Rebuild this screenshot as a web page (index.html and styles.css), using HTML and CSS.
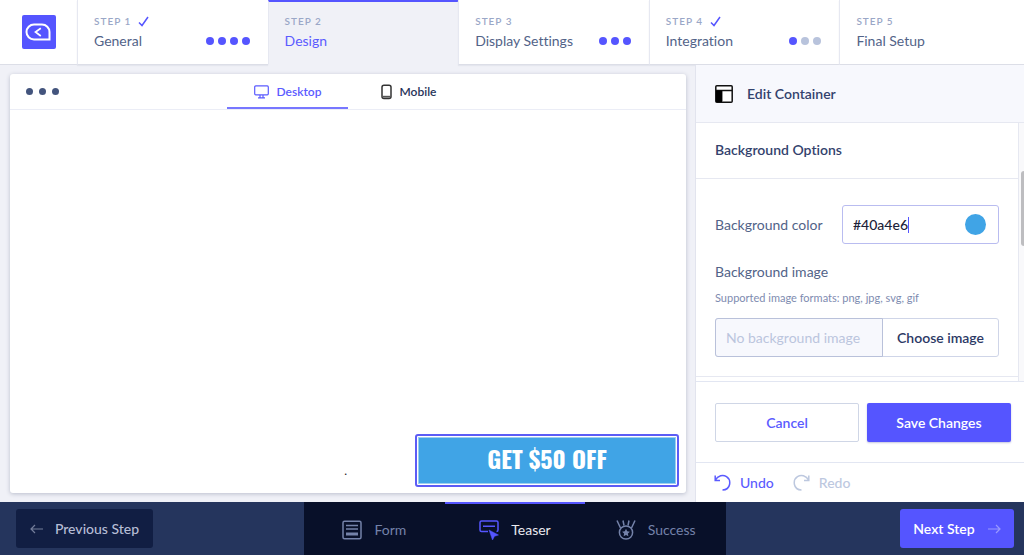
FILE: index.html
```
<!DOCTYPE html>
<html lang="en">
<head>
<meta charset="utf-8">
<meta name="viewport" content="width=device-width, initial-scale=1">
<title>Campaign editor</title>
<link rel="stylesheet" href="styles.css">
</head>
<body>
<div class="app">
  <header class="steps">
    <a class="brand" href="#" aria-label="Home">
      <svg width="34" height="34" viewBox="0 0 34 34"><rect width="34" height="34" rx="2" fill="#5555ff"/><path d="M12 9.500H20A7.500 7.500 0 0 1 27.500 17V24.500H12A7.500 7.500 0 0 1 12 9.500Z" fill="none" stroke="#fff" stroke-width="2"/><path d="M18.800 13.200L13.500 17l5.300 4" fill="none" stroke="#fff" stroke-width="1.700"/></svg>
    </a>
    <a class="step" href="#">
      <span class="step-no">STEP 1 <svg class="check" width="11" height="11" viewBox="0 0 11 11"><path d="M1 6.500L4 9.500L10 1"/></svg></span>
      <span class="step-name">General</span>
      <span class="dots"><i></i><i></i><i></i><i></i></span>
    </a>
    <a class="step step-active" href="#" aria-current="step">
      <span class="step-no">STEP 2</span>
      <span class="step-name">Design</span>
    </a>
    <a class="step" href="#">
      <span class="step-no">STEP 3</span>
      <span class="step-name">Display Settings</span>
      <span class="dots"><i></i><i></i><i></i></span>
    </a>
    <a class="step" href="#">
      <span class="step-no">STEP 4 <svg class="check" width="11" height="11" viewBox="0 0 11 11"><path d="M1 6.500L4 9.500L10 1"/></svg></span>
      <span class="step-name">Integration</span>
      <span class="dots"><i></i><i class="off"></i><i class="off"></i></span>
    </a>
    <a class="step" href="#">
      <span class="step-no">STEP 5</span>
      <span class="step-name">Final Setup</span>
    </a>
  </header>

  <main class="workspace">
    <section class="preview">
      <div class="preview-bar">
        <span class="window-dots"><i></i><i></i><i></i></span>
        <button class="device device-active" type="button"><svg width="15" height="14" viewBox="0 0 15 14" fill="none" stroke="currentColor" stroke-width="1.200"><rect x=".700" y=".900" width="13.600" height="8.900" rx="1"/><path d="M6 10v2.500M9 10v2.500M4 12.900h7"/></svg>Desktop</button>
        <button class="device" type="button"><svg width="11" height="16" viewBox="0 0 11 16" fill="none" stroke="#333" stroke-width="1.500"><rect x="1" y="1.200" width="9" height="13.300" rx="2"/><path d="M1.500 12.700h8" stroke="#555" stroke-width="1.800"/></svg>Mobile</button>
      </div>
      <div class="canvas">
        <span class="speck">.</span>
        <div class="teaser"><div class="teaser-body">GET $50 OFF</div></div>
      </div>
    </section>

    <aside class="panel">
      <div class="panel-head">
        <svg width="18" height="18" viewBox="0 0 18 18"><rect x=".800" y=".800" width="16.400" height="16.400" rx="1" fill="#fff" stroke="#111" stroke-width="1.500"/><path d="M1 5.500h16M6.800 5.500v11" stroke="#111" stroke-width="1.300"/><path d="M1 5.500h6v11.500H1z" fill="#000"/></svg>
        <h1>Edit Container</h1>
      </div>
      <div class="panel-scroll">
        <div class="options">
          <h2>Background Options</h2>
          <form class="fields">
            <div class="color-row">
              <label for="color">Background color</label>
              <div class="color-field"><input id="color" type="text" value="#40a4e6" size="7"><span class="caret"></span><button class="swatch" type="button" aria-label="Pick color"></button></div>
            </div>
            <label class="image-label" for="image">Background image</label>
            <p class="hint">Supported image formats: png, jpg, svg, gif</p>
            <div class="image-row">
              <input id="image" type="text" placeholder="No background image" readonly>
              <button type="button">Choose image</button>
            </div>
          </form>
        </div>
        <span class="thumb"></span>
      </div>
      <div class="actions">
        <button class="cancel" type="button">Cancel</button>
        <button class="save" type="button">Save Changes</button>
      </div>
      <div class="history">
        <button type="button"><svg width="17" height="17" viewBox="0 0 17 17" fill="none" stroke="currentColor" stroke-width="1.500"><path d="M1.200 1.500V6.500H6M1.200 6.200C4 1.500 9 .300 12.500 2.700C17.500 6 17 15.800 8.500 16"/></svg>Undo</button>
        <button type="button" disabled><svg width="17" height="17" viewBox="0 0 17 17" fill="none" stroke="currentColor" stroke-width="1.500"><path d="M15.800 1.500V6.500H11M15.800 6.200C13 1.500 8 .300 4.500 2.700C-.500 6 0 15.800 8.500 16"/></svg>Redo</button>
      </div>
    </aside>
  </main>

  <footer class="bottom">
    <div class="side"><button class="prev" type="button"><svg width="14" height="10" viewBox="0 0 14 10"><path d="M13 5H1M5 1L1 5l4 4"/></svg>Previous Step</button></div>
    <nav class="views">
      <a href="#"><svg width="20" height="20" viewBox="0 0 20 20" fill="none" stroke="currentColor" stroke-width="1.500"><rect x="1" y="1.300" width="18" height="17.400" rx="1.500"/><path d="M4 5.500h12M4 9h12"/><path d="M4 14h12" stroke-width="3"/></svg>Form</a>
      <a class="current" href="#"><svg width="20" height="20" viewBox="0 0 20 20"><path d="M9 11.500H2.500Q1 11.500 1 10V2.500Q1 1 2.500 1H17.500Q19 1 19 2.500V10Q19 11.500 17.500 11.500M4 6.300h12" fill="none" stroke="#5555ff" stroke-width="1.500"/><path d="M10 10L19.500 15L15.500 16.300L13.500 20Z" fill="#5555ff" stroke="#5555ff" stroke-width=".500"/></svg>Teaser</a>
      <a href="#"><svg width="20" height="20" viewBox="0 0 20 20" fill="none" stroke="currentColor" stroke-width="1.500"><circle cx="10" cy="12.500" r="6.600"/><path d="M1 .500L4.500 8M7 .500L8 5.500M13 .500L12 5.500M19 .500L15.500 8"/><path d="M10 8.800l1.200 2.500 2.700.400-2 1.900.500 2.700-2.400-1.300-2.400 1.300.500-2.700-2-1.900 2.700-.400z" fill="currentColor" stroke="none"/></svg>Success</a>
    </nav>
    <div class="side side-end"><button class="next" type="button">Next Step<svg width="14" height="10" viewBox="0 0 14 10"><path d="M1 5h12M9 1l4 4-4 4"/></svg></button></div>
  </footer>
</div>
</body>
</html>
```
FILE: styles.css
```
* { box-sizing: border-box; }
body { margin: 0; font: 14px/20px Lato, "Liberation Sans", sans-serif; font-variant-ligatures: none; color: #526388; background: #f0f1f7; }
button, input { font: inherit; color: inherit; margin: 0; }
button { border: 0; background: none; padding: 0; cursor: pointer; }
a { color: inherit; text-decoration: none; }
svg { flex: none; display: block; }
.app { display: flex; flex-direction: column; height: 100vh; overflow: hidden; }

.steps { display: grid; grid-template-columns: 77px repeat(4, 191fr) 185fr; height: 65px; flex: none; }
.brand { display: flex; align-items: center; justify-content: center; background: #fff; border-bottom: 1px solid #dcdee7; }
.step { display: grid; grid-template-columns: 1fr auto; align-content: start; padding: 11px 18px 0 16px; background: #fff; border-left: 1px solid #e6e8f1; border-bottom: 1px solid #dcdee7; box-shadow: 0 1px 1px #e4e6ee; }
.step-no { grid-column: 1 / -1; display: flex; align-items: center; gap: 7px; font-size: 10px; letter-spacing: 1px; color: #9aa7c7; font-weight: 600; }
.step-name { white-space: nowrap; }
.check { fill: none; stroke: #5555ff; stroke-width: 1.5; }
.step-active { background: #f0f1f7; border-top: 2px solid #5555ff; border-bottom-color: #f0f1f7; box-shadow: none; padding-top: 9px; }
.step-active .step-name { color: #5b5bff; }
.dots { display: flex; align-items: center; gap: 4px; }
.dots i { width: 8px; height: 8px; border-radius: 50%; background: #5555ff; }
.dots .off { background: #b8c3dc; }

.workspace { flex: 1; min-height: 0; display: grid; grid-template-columns: 1fr 329px; }
.preview { margin: 9px 9px 9px 10px; background: #fff; border-radius: 3px; box-shadow: 0 1px 4px #b9bdcc; display: flex; flex-direction: column; }
.preview-bar { height: 36px; border-bottom: 1px solid #ebedf6; display: flex; padding-left: 16px; }
.window-dots { display: flex; align-items: center; gap: 6px; width: 201px; }
.window-dots i { width: 7px; height: 7px; border-radius: 50%; background: #43547d; }
.device { display: flex; align-items: center; justify-content: center; gap: 8px; width: 121px; padding-top: 2px; font-size: 12px; font-weight: 600; color: #273459; border-bottom: 2px solid transparent; }
.device-active { color: #5b5bff; border-color: #7777ff; }
.canvas { flex: 1; display: flex; align-items: flex-end; justify-content: flex-end; gap: 68px; padding: 0 7px 6px; }
.speck { height: 26px; color: #222; font-size: 12px; }
.teaser { width: 264px; padding: 1px; border: 2px solid #5c5cf5; border-radius: 3px; }
.teaser-body { padding-bottom: 4px; border: 1px solid #9dcef0; background: #40a4e6; color: #fff; text-align: center; font: bold 24px/41px Oswald, "Roboto Condensed", "Liberation Sans", sans-serif; }

.panel { background: #fff; border-left: 1px solid #e2e4ee; display: flex; flex-direction: column; min-height: 0; }
.panel-head { height: 58px; flex: none; display: flex; align-items: center; gap: 14px; padding-left: 19px; background: #f7f8fd; border-bottom: 1px solid #e6e8f1; }
h1, h2 { margin: 0; font-size: 14px; line-height: 20px; font-weight: 600; color: #33426d; }
.panel-scroll { flex: 1; min-height: 0; position: relative; overflow: hidden; padding-right: 5px; background: #f9f9fb; }
.options { background: #fff; border-right: 1px solid #e6e8f1; height: 100%; }
h2 { padding: 17px 19px 18px; border-bottom: 1px solid #e6e8f1; }
.fields { padding: 26px 19px 19px; border-bottom: 1px solid #e6e8f1; }
.color-row { display: flex; align-items: center; justify-content: space-between; margin-bottom: 18px; }
.color-field { display: flex; align-items: center; width: 157px; height: 39px; padding: 0 12px 0 10px; border: 1px solid #b9bcf0; border-radius: 3px; color: #1c2238; font-weight: 500; }
.color-field input { border: 0; outline: 0; padding: 0; background: none; width: 55px; }
.caret { width: 1px; height: 16px; background: #5555ff; }
.swatch { width: 21px; height: 21px; border-radius: 50%; background: #40a4e6; margin-left: auto; }
.image-label { display: block; }
.hint { margin: 7px 0 11px; font-size: 11px; line-height: 18px; color: #7e8bb0; }
.image-row { display: flex; height: 39px; border: 1px solid #cfd5e8; border-radius: 3px; }
.image-row input { flex: 1; min-width: 0; padding: 0 10px; margin: -1px 0 -1px -1px; background: #f7f8fd; border: 1px solid #b9c1da; border-radius: 3px 0 0 3px; outline: 0; }
.image-row input::placeholder { color: #bbc5dd; opacity: 1; }
.image-row button { width: 115px; font-weight: 600; color: #2c3965; }
.thumb { position: absolute; right: 0; top: 48px; width: 3px; height: 75px; border-radius: 3px 0 0 3px; background: #bdbdc0; }
.actions { flex: none; display: grid; grid-template-columns: 1fr 1fr; gap: 8px; padding: 21px 13px 20px 19px; border-top: 1px solid #e2e6f2; border-bottom: 1px solid #e2e6f2; }
.actions button { height: 39px; border-radius: 2px; font-weight: 600; }
.actions .cancel { border: 1px solid #cfd6e6; color: #5b5bff; }
.actions .save { background: #5555ff; color: #fff; box-shadow: 0 1px 2px #c4c6df; }
.history { flex: none; height: 39px; display: flex; align-items: center; gap: 19px; padding: 0 19px 0 18px; }
.history button { display: flex; align-items: center; gap: 9px; color: #5b5bff; font-weight: 500; }
.history button:disabled { color: #bdc8df; }

.bottom { flex: none; height: 53px; display: grid; grid-template-columns: 304fr 422px 298fr; background: #25355d; }
.side { display: flex; align-items: center; padding: 0 10px 0 16px; }
.side-end { justify-content: flex-end; }
.side button { display: flex; align-items: center; justify-content: center; height: 39px; border-radius: 3px; font-weight: 500; }
.side svg { fill: none; stroke: currentColor; stroke-width: 1.2; opacity: .6; }
.side .prev { width: 137px; gap: 11px; background: #111e43; color: #b6bdd5; }
.side .next { width: 114px; gap: 12px; background: #5555ff; color: #fff; font-weight: 600; }
.side .next svg { opacity: .4; }
.views { display: grid; grid-template-columns: repeat(3, 1fr); background: #081029; }
.views a { display: flex; align-items: center; justify-content: center; gap: 12px; color: #7482a9; border-top: 2px solid transparent; }
.views .current { color: #e8e9ef; border-color: #5555ff; }
```
